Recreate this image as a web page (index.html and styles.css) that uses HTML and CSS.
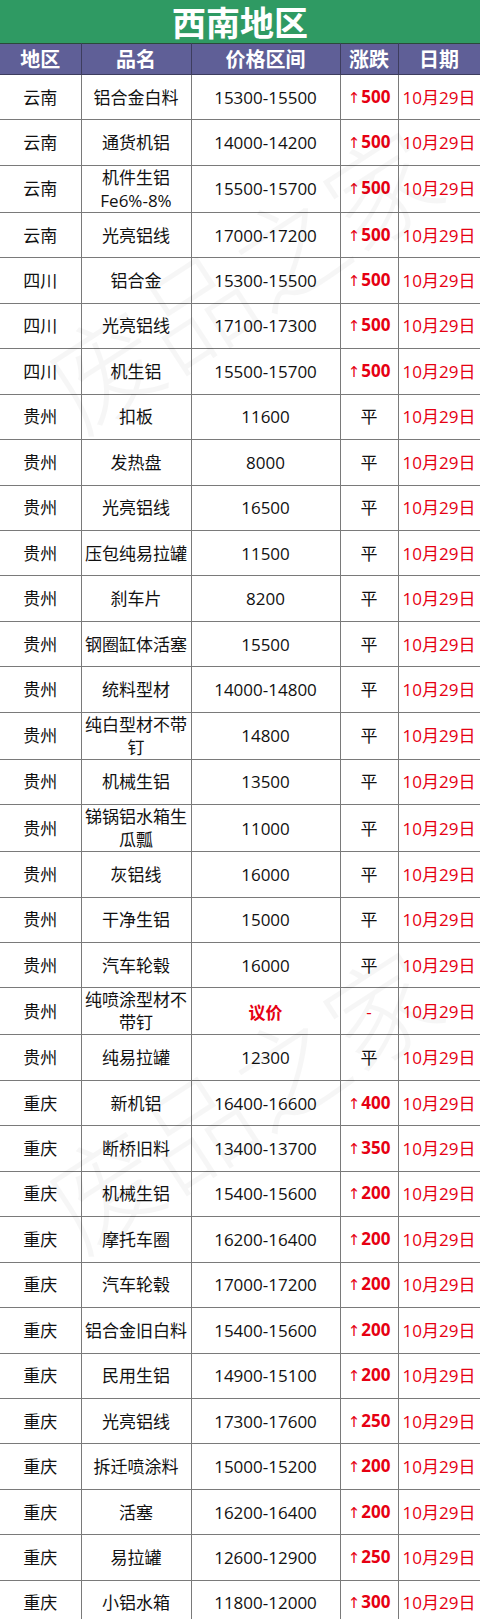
FILE: index.html
```html
<!DOCTYPE html>
<html lang="zh-CN">
<head>
<meta charset="utf-8">
<title>西南地区</title>
<link rel="stylesheet" href="styles.css">
</head>
<body>
<div class="page">
  <div class="title">西南地区</div>
  <table class="grid">
    <colgroup>
      <col class="c1"><col class="c2"><col class="c3"><col class="c4"><col class="c5">
    </colgroup>
    <thead>
      <tr><th>地区</th><th>品名</th><th>价格区间</th><th>涨跌</th><th>日期</th></tr>
    </thead>
    <tbody>
      <tr><td>云南</td><td>铝合金白料</td><td>15300-15500</td><td class="up"><span class="ar">↑</span>500</td><td class="date">10月29日</td></tr>
      <tr><td>云南</td><td>通货机铝</td><td>14000-14200</td><td class="up"><span class="ar">↑</span>500</td><td class="date">10月29日</td></tr>
      <tr><td>云南</td><td>机件生铝<br>Fe6%-8%</td><td>15500-15700</td><td class="up"><span class="ar">↑</span>500</td><td class="date">10月29日</td></tr>
      <tr><td>云南</td><td>光亮铝线</td><td>17000-17200</td><td class="up"><span class="ar">↑</span>500</td><td class="date">10月29日</td></tr>
      <tr><td>四川</td><td>铝合金</td><td>15300-15500</td><td class="up"><span class="ar">↑</span>500</td><td class="date">10月29日</td></tr>
      <tr><td>四川</td><td>光亮铝线</td><td>17100-17300</td><td class="up"><span class="ar">↑</span>500</td><td class="date">10月29日</td></tr>
      <tr><td>四川</td><td>机生铝</td><td>15500-15700</td><td class="up"><span class="ar">↑</span>500</td><td class="date">10月29日</td></tr>
      <tr><td>贵州</td><td>扣板</td><td>11600</td><td>平</td><td class="date">10月29日</td></tr>
      <tr><td>贵州</td><td>发热盘</td><td>8000</td><td>平</td><td class="date">10月29日</td></tr>
      <tr><td>贵州</td><td>光亮铝线</td><td>16500</td><td>平</td><td class="date">10月29日</td></tr>
      <tr><td>贵州</td><td>压包纯易拉罐</td><td>11500</td><td>平</td><td class="date">10月29日</td></tr>
      <tr><td>贵州</td><td>刹车片</td><td>8200</td><td>平</td><td class="date">10月29日</td></tr>
      <tr><td>贵州</td><td>钢圈缸体活塞</td><td>15500</td><td>平</td><td class="date">10月29日</td></tr>
      <tr><td>贵州</td><td>统料型材</td><td>14000-14800</td><td>平</td><td class="date">10月29日</td></tr>
      <tr><td>贵州</td><td>纯白型材不带钉</td><td>14800</td><td>平</td><td class="date">10月29日</td></tr>
      <tr><td>贵州</td><td>机械生铝</td><td>13500</td><td>平</td><td class="date">10月29日</td></tr>
      <tr><td>贵州</td><td>锑锅铝水箱生瓜瓢</td><td>11000</td><td>平</td><td class="date">10月29日</td></tr>
      <tr><td>贵州</td><td>灰铝线</td><td>16000</td><td>平</td><td class="date">10月29日</td></tr>
      <tr><td>贵州</td><td>干净生铝</td><td>15000</td><td>平</td><td class="date">10月29日</td></tr>
      <tr><td>贵州</td><td>汽车轮毂</td><td>16000</td><td>平</td><td class="date">10月29日</td></tr>
      <tr><td>贵州</td><td>纯喷涂型材不带钉</td><td class="nego">议价</td><td class="dash">-</td><td class="date">10月29日</td></tr>
      <tr><td>贵州</td><td>纯易拉罐</td><td>12300</td><td>平</td><td class="date">10月29日</td></tr>
      <tr><td>重庆</td><td>新机铝</td><td>16400-16600</td><td class="up"><span class="ar">↑</span>400</td><td class="date">10月29日</td></tr>
      <tr><td>重庆</td><td>断桥旧料</td><td>13400-13700</td><td class="up"><span class="ar">↑</span>350</td><td class="date">10月29日</td></tr>
      <tr><td>重庆</td><td>机械生铝</td><td>15400-15600</td><td class="up"><span class="ar">↑</span>200</td><td class="date">10月29日</td></tr>
      <tr><td>重庆</td><td>摩托车圈</td><td>16200-16400</td><td class="up"><span class="ar">↑</span>200</td><td class="date">10月29日</td></tr>
      <tr><td>重庆</td><td>汽车轮毂</td><td>17000-17200</td><td class="up"><span class="ar">↑</span>200</td><td class="date">10月29日</td></tr>
      <tr><td>重庆</td><td>铝合金旧白料</td><td>15400-15600</td><td class="up"><span class="ar">↑</span>200</td><td class="date">10月29日</td></tr>
      <tr><td>重庆</td><td>民用生铝</td><td>14900-15100</td><td class="up"><span class="ar">↑</span>200</td><td class="date">10月29日</td></tr>
      <tr><td>重庆</td><td>光亮铝线</td><td>17300-17600</td><td class="up"><span class="ar">↑</span>250</td><td class="date">10月29日</td></tr>
      <tr><td>重庆</td><td>拆迁喷涂料</td><td>15000-15200</td><td class="up"><span class="ar">↑</span>200</td><td class="date">10月29日</td></tr>
      <tr><td>重庆</td><td>活塞</td><td>16200-16400</td><td class="up"><span class="ar">↑</span>200</td><td class="date">10月29日</td></tr>
      <tr><td>重庆</td><td>易拉罐</td><td>12600-12900</td><td class="up"><span class="ar">↑</span>250</td><td class="date">10月29日</td></tr>
      <tr><td>重庆</td><td>小铝水箱</td><td>11800-12000</td><td class="up"><span class="ar">↑</span>300</td><td class="date">10月29日</td></tr>
    </tbody>
  </table>
  <div class="wm wm1">废品之家</div>
  <div class="wm wm2">废品之家</div>
</div>
</body>
</html>
```

FILE: styles.css
```css
* { box-sizing: border-box; }
html, body { margin: 0; padding: 0; background: #ffffff; }
body {
  font-family: "Open Sans", "Noto Sans CJK SC", sans-serif;
  color: #111111;
}
.page {
  position: relative;
  width: 480px;
  overflow: hidden;
}
.title {
  height: 43px;
  display: flex;
  align-items: center;
  justify-content: center;
  background: #2f9a63;
  color: #ffffff;
  font-family: "Noto Sans CJK SC", sans-serif;
  font-weight: 700;
  font-size: 34px;
  line-height: 1;
}
.grid {
  width: 480px;
  table-layout: fixed;
  border-collapse: collapse;
}
.c1 { width: 81px; }
.c2 { width: 110px; }
.c3 { width: 149px; }
.c4 { width: 58px; }
.c5 { width: 82px; }
.grid thead tr { height: 31px; }
.grid tbody tr { height: 45.44px; }
.grid th {
  background: #5f5f97;
  color: #ffffff;
  font-family: "Noto Sans CJK SC", sans-serif;
  font-weight: 700;
  font-size: 20px;
  line-height: 22px;
  padding: 0;
  border: 1px solid #3d3d5e;
  border-top: 1px solid #2b4a3a;
}
.grid th:first-child, .grid td:first-child { border-left: none; }
.grid td {
  padding: 0 2px;
  text-align: center;
  vertical-align: middle;
  font-size: 17px;
  line-height: 23px;
  border: 1px solid #7a7a7a;
  color: #111111;
}
.grid td.up {
  color: #e60012;
  font-weight: 700;
  padding: 0;
}
.ar {
  font-family: "DejaVu Sans", sans-serif;
  font-weight: 400;
  font-size: 15px;
  margin-right: 1px;
}
.grid td.date {
  color: #e60012;
  padding: 0;
}
.grid td.nego {
  color: #e60012;
  font-weight: 700;
  font-family: "Noto Sans CJK SC", sans-serif;
}
.grid td.dash { color: #e60012; }
.wm {
  position: absolute;
  pointer-events: none;
  font-family: "Noto Sans CJK SC", sans-serif;
  font-weight: 300;
  font-size: 110px;
  line-height: 1;
  color: rgba(0, 0, 0, 0.035);
  white-space: nowrap;
  transform: rotate(-33deg);
  transform-origin: center;
}
.wm1 { left: 20px; top: 220px; }
.wm2 { left: 20px; top: 1040px; }
```
